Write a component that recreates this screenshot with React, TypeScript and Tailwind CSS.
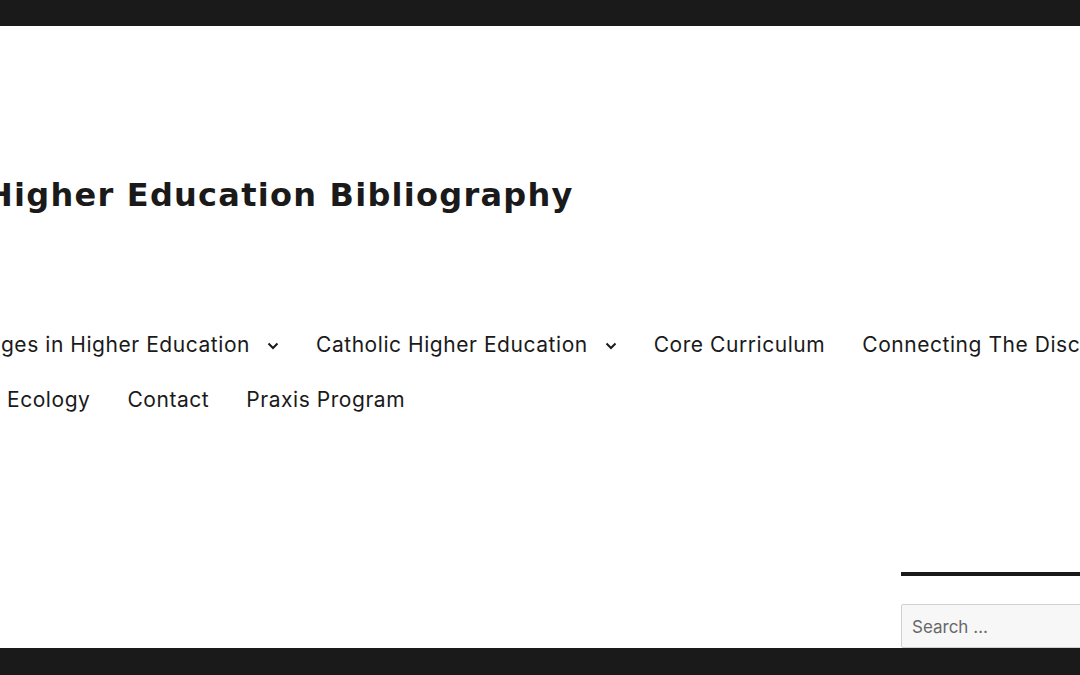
import React from 'react';

const navFont = { fontFamily: 'Inter, "Liberation Sans", sans-serif' };
const titleFont = { fontFamily: '"DejaVu Sans", Inter, sans-serif' };

function Chevron() {
  return (
    <svg width="12" height="8" viewBox="0 0 12 8" className="ml-[17px] mt-[3px]" fill="none" stroke="#1a1a1a" strokeWidth="2">
      <path d="M1.5 1.5l4.5 4.5 4.5-4.5" />
    </svg>
  );
}

function NavItem({ label, dropdown }: { label: string; dropdown?: boolean }) {
  return (
    <a className="flex items-center whitespace-nowrap text-[21px] tracking-[0.55px] leading-[55px] text-[#1a1a1a] mr-[37px]">
      {label}
      {dropdown && <Chevron />}
    </a>
  );
}

export default function App() {
  return (
    <div className="w-[1080px] h-[675px] flex flex-col bg-[#1a1a1a] overflow-hidden" style={navFont}>
      <div className="h-[26px] shrink-0" />
      <div className="h-[622px] bg-white overflow-hidden flex">
        <div className="w-[901px] shrink-0 flex flex-col">
          <h1
            className="mt-[149px] ml-[-14px] whitespace-nowrap text-[32px] tracking-[1.25px] leading-[40px] font-bold text-[#1a1a1a]"
            style={titleFont}
          >
            Higher Education Bibliography
          </h1>
          <nav className="mt-[102px] flex flex-col">
            <div className="flex">
              <div className="w-[279px] shrink-0 flex justify-end">
                <a className="flex items-center whitespace-nowrap text-[21px] tracking-[0.55px] leading-[55px] text-[#1a1a1a]">
                  Challenges in Higher Education
                  <Chevron />
                </a>
              </div>
              <div className="ml-[37px] flex">
                <NavItem label="Catholic Higher Education" dropdown />
                <NavItem label="Core Curriculum" />
                <NavItem label="Connecting The Disciplines" />
              </div>
            </div>
            <div className="flex pl-[7px]">
              <NavItem label="Ecology" />
              <NavItem label="Contact" />
              <NavItem label="Praxis Program" />
            </div>
          </nav>
        </div>
        <aside className="flex-1 min-w-0 flex flex-col pt-[546px]">
          <div className="h-[4px] bg-[#1a1a1a]" />
          <div className="mt-[28px] h-[50px] w-[260px] border border-[#d1d1d1] bg-[#f7f7f7] rounded-[2px] pl-[10px] pt-[3px] flex items-center text-[17px] text-[#686868] whitespace-nowrap">
            Search …
          </div>
        </aside>
      </div>
    </div>
  );
}
